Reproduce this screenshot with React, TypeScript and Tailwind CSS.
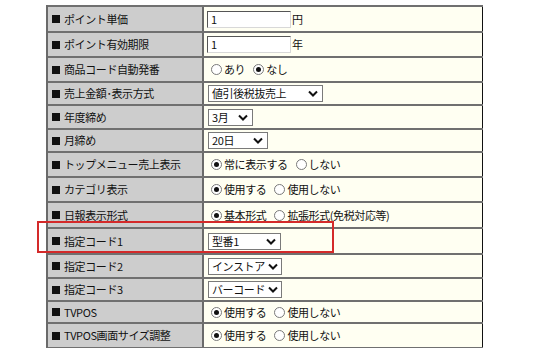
import React from 'react';

type Opt = { label: string; checked: boolean };

type Row = {
  label: string;
  h: string;
  kind: 'input' | 'radio' | 'select';
  value?: string;
  unit?: string;
  width?: string;
  options?: Opt[];
};

const rows: Row[] = [
  { label: 'ポイント単価', h: 'h-[26px]', kind: 'input', value: '1', unit: '円' },
  { label: 'ポイント有効期限', h: 'h-[25px]', kind: 'input', value: '1', unit: '年' },
  {
    label: '商品コード自動発番',
    h: 'h-[25px]',
    kind: 'radio',
    options: [
      { label: 'あり', checked: false },
      { label: 'なし', checked: true },
    ],
  },
  { label: '売上金額･表示方式', h: 'h-[23px]', kind: 'select', value: '値引後税抜売上', width: 'w-[115px]' },
  { label: '年度締め', h: 'h-[24px]', kind: 'select', value: '3月', width: 'w-[45px]' },
  { label: '月締め', h: 'h-[23px]', kind: 'select', value: '20日', width: 'w-[60px]' },
  {
    label: 'トップメニュー売上表示',
    h: 'h-[25px]',
    kind: 'radio',
    options: [
      { label: '常に表示する', checked: true },
      { label: 'しない', checked: false },
    ],
  },
  {
    label: 'カテゴリ表示',
    h: 'h-[25px]',
    kind: 'radio',
    options: [
      { label: '使用する', checked: true },
      { label: '使用しない', checked: false },
    ],
  },
  {
    label: '日報表示形式',
    h: 'h-[26px]',
    kind: 'radio',
    options: [
      { label: '基本形式', checked: true },
      { label: '拡張形式(免税対応等)', checked: false },
    ],
  },
  { label: '指定コード1', h: 'h-[26px]', kind: 'select', value: '型番1', width: 'w-[73px]' },
  { label: '指定コード2', h: 'h-[24px]', kind: 'select', value: 'インストア', width: 'w-[74px]' },
  { label: '指定コード3', h: 'h-[23px]', kind: 'select', value: 'バーコード', width: 'w-[74px]' },
  {
    label: 'TVPOS',
    h: 'h-[22px]',
    kind: 'radio',
    options: [
      { label: '使用する', checked: true },
      { label: '使用しない', checked: false },
    ],
  },
  {
    label: 'TVPOS画面サイズ調整',
    h: 'h-[25px]',
    kind: 'radio',
    options: [
      { label: '使用する', checked: true },
      { label: '使用しない', checked: false },
    ],
  },
];

function Radio({ checked }: { checked: boolean }) {
  return (
    <span className="inline-flex items-center justify-center w-[11px] h-[11px] rounded-full border border-[#7a7a7a] bg-white">
      {checked && <span className="w-[5px] h-[5px] rounded-full bg-[#111]" />}
    </span>
  );
}

function Chevron() {
  return (
    <svg width="10" height="7" viewBox="0 0 10 7" className="shrink-0">
      <polyline points="1,1.5 5,5.5 9,1.5" fill="none" stroke="#111" strokeWidth="2" />
    </svg>
  );
}

function Cell({ row }: { row: Row }) {
  if (row.kind === 'input') {
    return (
      <div className="flex items-center pl-[3px] whitespace-nowrap">
        <div className="w-[84px] h-[17px] bg-white border border-t-[#555] border-l-[#555] border-b-[#d8d8d8] border-r-[#d8d8d8] pl-[3px] flex items-center leading-none">
          {row.value}
        </div>
        <span className="ml-[1px]">{row.unit}</span>
      </div>
    );
  }
  if (row.kind === 'select') {
    return (
      <div className="flex items-center pl-[4px] whitespace-nowrap">
        <div
          className={`${row.width} h-[17px] bg-white border border-[#7a7a7a] flex items-center justify-between gap-[3px] pl-[3px] pr-[4px] leading-none overflow-hidden`}
        >
          <span>{row.value}</span>
          <Chevron />
        </div>
      </div>
    );
  }
  return (
    <div className="flex items-center pl-[7px] gap-[8px] whitespace-nowrap">
      {row.options?.map((o) => (
        <span key={o.label} className="flex items-center gap-[2px]">
          <Radio checked={o.checked} />
          <span>{o.label}</span>
        </span>
      ))}
    </div>
  );
}

export default function App() {
  return (
    <div
      className="relative w-[550px] h-[348px] overflow-hidden bg-white pt-[5px] pl-[46px] text-[11px] text-[#111] tracking-[-0.4px]"
      style={{ fontFamily: '"Noto Sans CJK JP", "Noto Sans", sans-serif' }}
    >
      <div className="w-[437px] border-l-2 border-[#6a6a6a]">
        {rows.map((row, i) => (
          <div key={i} className={`${row.h} flex border-t-2 border-[#707070]`}>
            <div className="w-[156px] bg-[#cdcdcd] border-r-2 border-[#6a6a6a] flex items-center pl-[4px] gap-[4px] whitespace-nowrap">
              <span className="w-[8px] h-[8px] bg-[#111] shrink-0" />
              <span>{row.label}</span>
            </div>
            <div className="flex-1 bg-[#fffff2] border-r border-[#111] flex items-center">
              <Cell row={row} />
            </div>
          </div>
        ))}
        <div className="border-t-2 border-[#707070]" />
      </div>
      <div className="absolute left-[37px] top-[221px] w-[297px] h-[32px] border-2 border-[#d42a2a]" />
    </div>
  );
}
